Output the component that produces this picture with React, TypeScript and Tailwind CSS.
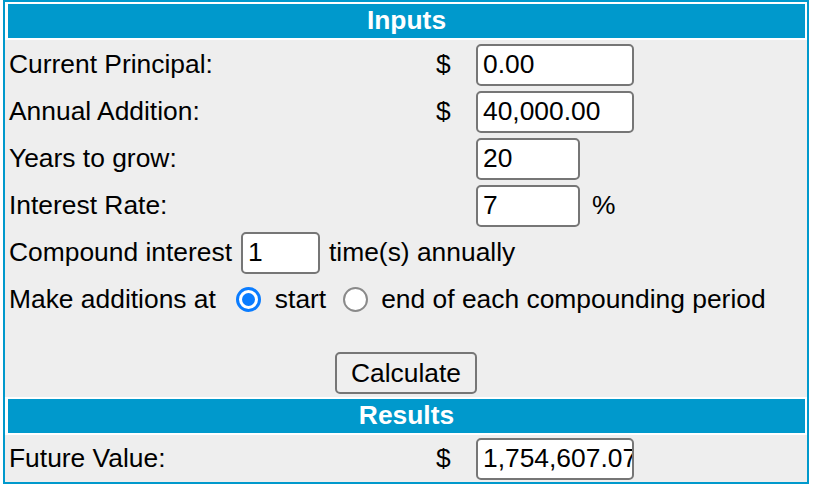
import { ReactNode } from 'react';

const inputCls =
  'h-[42px] rounded-[5px] border-2 border-[#767676] bg-white pl-[5px] text-[26.4px] text-black outline-none';

function SectionHeader({ title }: { title: string }) {
  return (
    <div className="bg-white p-[2px] pl-[3px]">
      <div className="flex h-[34px] items-center justify-center bg-[#0099cc] font-bold text-white">
        {title}
      </div>
    </div>
  );
}

function MoneyRow({
  label,
  value,
  dollar = true,
  width = 'w-[158px]',
  after,
}: {
  label: string;
  value: string;
  dollar?: boolean;
  width?: string;
  after?: ReactNode;
}) {
  return (
    <div className="flex h-[47px] items-center pl-[4px]">
      <span className="w-[427px]">{label}</span>
      <span className="w-[40px]">{dollar ? '$' : ''}</span>
      <input readOnly defaultValue={value} className={`${inputCls} ${width}`} />
      {after}
    </div>
  );
}

function Radio({ checked }: { checked?: boolean }) {
  if (checked) {
    return (
      <span className="flex h-[25px] w-[25px] items-center justify-center rounded-full border-[3px] border-[#0a7cff] bg-white">
        <span className="h-[13px] w-[13px] rounded-full bg-[#0a7cff]" />
      </span>
    );
  }
  return <span className="block h-[25px] w-[25px] rounded-full border-2 border-[#8a8a8a] bg-white" />;
}

export default function App() {
  return (
    <div className="bg-white font-['Liberation_Sans',Arial,sans-serif] text-[26.4px] text-black">
      <div className="ml-[3px] w-[806px] border-2 border-[#0099cc] bg-[#eeeeee]">
        <SectionHeader title="Inputs" />
        <div className="pt-[1px]">
          <MoneyRow label="Current Principal:" value="0.00" />
          <MoneyRow label="Annual Addition:" value="40,000.00" />
          <MoneyRow label="Years to grow:" value="20" dollar={false} width="w-[104px]" />
          <MoneyRow
            label="Interest Rate:"
            value="7"
            dollar={false}
            width="w-[104px]"
            after={<span className="ml-[12px]">%</span>}
          />
          <div className="flex h-[47px] items-center pl-[4px]">
            <span>Compound interest</span>
            <input readOnly defaultValue="1" className={`${inputCls} ml-[9px] w-[79px]`} />
            <span className="ml-[9px]">time(s) annually</span>
          </div>
          <div className="flex h-[47px] items-center pl-[4px]">
            <span>Make additions at</span>
            <span className="ml-[20px]">
              <Radio checked />
            </span>
            <span className="ml-[14px]">start</span>
            <span className="ml-[17px]">
              <Radio />
            </span>
            <span className="ml-[13px]">end of each compounding period</span>
          </div>
        </div>
        <div className="mt-[29px] flex justify-center">
          <button className="h-[42px] w-[142px] rounded-[5px] border-2 border-[#767676] bg-[#efefef] text-[26.4px] text-black">
            Calculate
          </button>
        </div>
        <div className="mt-[3px]">
          <SectionHeader title="Results" />
        </div>
        <MoneyRow label="Future Value:" value="1,754,607.07" />
      </div>
    </div>
  );
}
